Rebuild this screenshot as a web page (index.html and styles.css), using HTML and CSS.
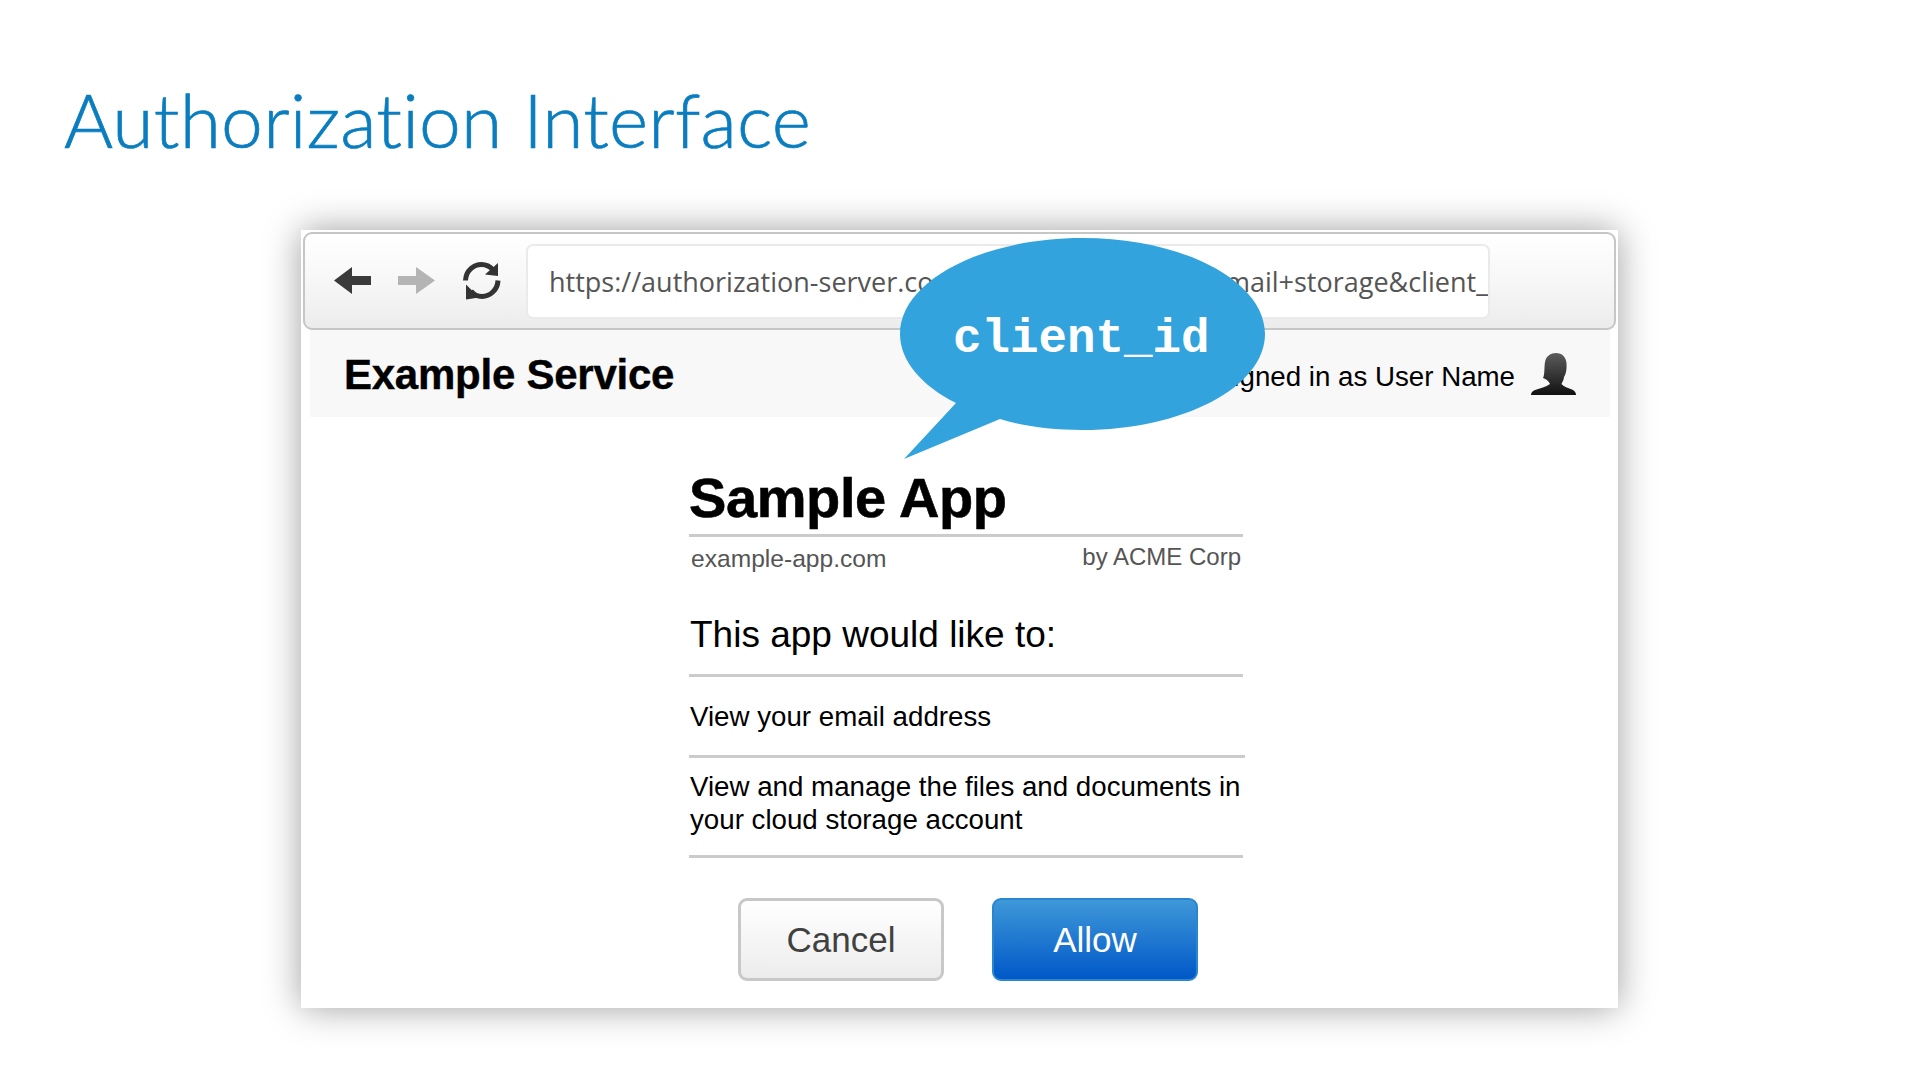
FILE: index.html
```html
<!DOCTYPE html>
<html lang="en">
<head>
<meta charset="utf-8">
<title>Authorization Interface</title>
<link rel="stylesheet" href="styles.css">
</head>
<body>
<main class="slide">
  <h1 class="slide-title">Authorization Interface</h1>
  <section class="window">
    <div class="toolbar">
      <div class="nav-icons">
        <svg class="icon-arrow" viewBox="0 0 38 28"><path class="arrow-back" d="M0 13.5 18 0V9H37V18H18V27Z"/></svg>
        <svg class="icon-arrow" viewBox="0 0 38 28"><path class="arrow-forward" d="M37 13.5 18 0V9H0V18H18V27Z"/></svg>
        <svg class="icon-reload" viewBox="0 0 38 38">
          <path class="reload-stroke" d="M2.500 18.500C3 8 11 2.500 18.500 2.500C23 2.500 27 4.500 30 8"/>
          <path class="reload-head" d="M35 1V14L22 12.500Z"/>
          <path class="reload-stroke" d="M35 18.500C34.500 28 27 34.500 19 34.500C14.500 34.500 11 33 8 29"/>
          <path class="reload-head" d="M3 22.500V37.500L16 35.500Z"/>
        </svg>
      </div>
      <div class="url-field">
        <span>https://authorization-server.com/auth?scope=</span>
        <span>email+storage&amp;client_</span>
      </div>
    </div>
    <header class="service-bar">
      <div class="service-name">Example Service</div>
      <div class="user">
        <span class="user-name">Signed in as User Name</span>
        <svg class="user-icon" viewBox="0 0 45 42">
          <defs><linearGradient id="userFill" x1="0" y1="0" x2="0" y2="1"><stop offset="0" stop-color="#5c5c5c"/><stop offset="1" stop-color="#111"/></linearGradient></defs>
          <path fill="url(#userFill)" d="M25 0C31 0 35 4 35.500 10C36 16 35 21 33 24C33 27 31 29 30.500 31C33 34 38 35 42 37C44 38 45 40 45 42H0C0 40 1 38 4 37C9 35 15 34 19 31C18 29 17 27 12 25C14 21 13 15 14 9C15 3 20 0 25 0Z"/>
        </svg>
      </div>
    </header>
    <div class="consent">
      <h2 class="app-name">Sample App</h2>
      <div class="app-meta">
        <span class="app-url">example-app.com</span>
        <span class="app-owner">by ACME Corp</span>
      </div>
      <h3 class="scope-title">This app would like to:</h3>
      <ul class="scopes">
        <li class="scope scope-single">View your email address</li>
        <li class="scope scope-double">View and manage the files and documents in your cloud storage account</li>
      </ul>
      <div class="actions">
        <button class="btn btn-cancel" type="button">Cancel</button>
        <button class="btn btn-allow" type="button">Allow</button>
      </div>
    </div>
    <div class="bubble">
      <svg class="bubble-shape" viewBox="0 0 365 221"><path d="M182.500 0C283 0 365 43 365 96C365 149 283 192 182.500 192C150 192 122 188 100 181L4 221L56 165C22 148 0 123 0 96C0 43 82 0 182.500 0Z"/></svg>
      <span class="bubble-label">client_id</span>
    </div>
  </section>
</main>
</body>
</html>
```

FILE: styles.css
```css
* { box-sizing: border-box; }
html, body { margin: 0; padding: 0; background: #fff; }
body { width: 1920px; height: 1080px; overflow: hidden; font-family: "Liberation Sans", Arial, sans-serif; }

.slide { display: flex; flex-direction: column; height: 1080px; }
.slide-title {
  margin: 0;
  height: 230px;
  padding: 74px 0 0 64px;
  font-family: Lato, "Open Sans", sans-serif;
  font-weight: 300;
  font-size: 75px;
  line-height: 90px;
  color: #0a7dbf;
  letter-spacing: 0.2px;
  -webkit-text-stroke: 0.7px #0a7dbf;
}

.window {
  position: relative;
  margin-left: 301px;
  width: 1317px;
  height: 778px;
  background: #fff;
  padding: 2px 2px 0 2px;
  box-shadow: 0 0 34px rgba(0, 0, 0, 0.38);
}

.toolbar {
  display: flex;
  align-items: center;
  height: 98px;
  border: 2px solid #c6c6c6;
  border-radius: 9px;
  background: linear-gradient(#fff, #f7f7f7 50%, #ececec);
  padding: 0 0 0 29px;
}
.nav-icons { display: flex; align-items: center; width: 192px; }
.icon-arrow { width: 38px; height: 28px; margin-right: 26px; }
.arrow-back { fill: #3a3a3a; }
.arrow-forward { fill: #b4b4b4; }
.icon-reload { width: 38px; height: 38px; margin-left: 1px; }
.reload-stroke { fill: none; stroke: #333; stroke-width: 5; }
.reload-head { fill: #333; }

.url-field {
  display: flex;
  justify-content: space-between;
  align-items: center;
  width: 964px;
  height: 75px;
  padding: 0 0 0 21px;
  background: #fff;
  border: 2px solid #eaeaea;
  border-radius: 7px;
  font-family: "Open Sans", sans-serif;
  font-size: 27px;
  color: #555;
  white-space: nowrap;
  overflow: hidden;
}

.service-bar {
  display: flex;
  justify-content: space-between;
  align-items: center;
  height: 87px;
  margin: 0 6px 0 7px;
  padding: 0 34px 0 34px;
  background: #f8f8f8;
}
.service-name { font-size: 42px; font-weight: 700; color: #000; letter-spacing: -0.25px; padding-top: 2px; -webkit-text-stroke: 0.4px #000; }
.user { display: flex; align-items: center; gap: 16px; }
.user-name { font-size: 27.700px; color: #000; padding-top: 7px; }
.user-icon { width: 45px; height: 42px; }

.consent { width: 558px; margin-left: 386px; }
.app-name {
  margin: 0;
  height: 120px;
  padding-top: 49px;
  border-bottom: 3px solid #cbcbcb;
  font-size: 56px;
  line-height: 64px;
  font-weight: 700;
  color: #000;
  width: 554px;
  letter-spacing: -0.4px;
  -webkit-text-stroke: 0.6px #000;
}
.app-meta {
  display: flex;
  justify-content: space-between;
  width: 552px;
  padding: 7px 0 0 2px;
  font-size: 24px;
  line-height: 30px;
  color: #555;
}
.app-url { font-size: 24.600px; }
.app-owner { margin-top: -2px; }
.scope-title {
  margin: 0;
  height: 103px;
  padding: 39px 0 0 1px;
  width: 554px;
  border-bottom: 3px solid #cbcbcb;
  font-size: 37px;
  line-height: 44px;
  font-weight: 400;
  color: #000;
}
.scopes { list-style: none; margin: 0; padding: 0; }
.scope { font-size: 27.700px; line-height: 33px; color: #000; padding-left: 1px; }
.scope-single { width: 556px; height: 81px; padding-top: 23px; margin: 0; border-bottom: 3px solid #cbcbcb; }
.scope-double { width: 554px; height: 100px; padding-top: 12px; border-bottom: 3px solid #cbcbcb; }

.actions { display: flex; gap: 48px; margin: 40px 0 0 49px; }
.btn {
  width: 206px;
  height: 83px;
  border-radius: 9px;
  font-family: "Liberation Sans", Arial, sans-serif;
  font-size: 35px;
  padding: 0;
}
.btn-cancel {
  border: 3px solid #c8c8c8;
  background: linear-gradient(#fff, #ececec);
  color: #404040;
}
.btn-allow {
  border: 2px solid #2b86d0;
  background: linear-gradient(#3f98d8, #0058c8);
  color: #fff;
}

.bubble {
  position: absolute;
  left: 599px;
  top: 8px;
  width: 365px;
  height: 221px;
}
.bubble-shape { display: block; width: 365px; height: 221px; }
.bubble-shape path { fill: #32a3dc; }
.bubble-label {
  position: absolute;
  left: 53px;
  top: 73px;
  font-family: "Liberation Mono", monospace;
  font-weight: 700;
  font-size: 47.500px;
  line-height: 56px;
  color: #fff;
}
```
